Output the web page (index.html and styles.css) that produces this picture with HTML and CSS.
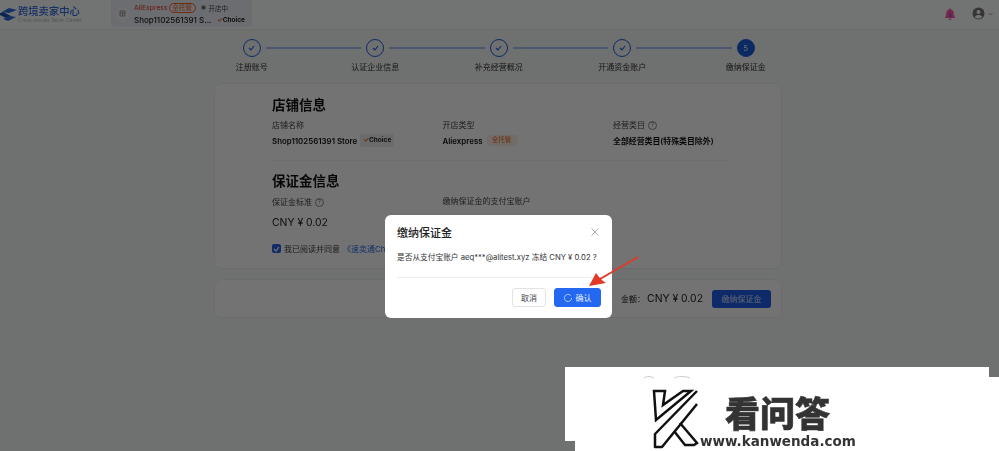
FILE: index.html
```html
<!DOCTYPE html>
<html lang="zh-CN">
<head>
    <meta charset="UTF-8">
    <meta name="viewport" content="width=device-width, initial-scale=1.0">
    <title>跨境卖家中心</title>
    <link rel="stylesheet" href="styles.css">
</head>
<body>

<div class="page">
    <header class="topbar">
        <div class="logo">
            <svg class="logo-mark" width="18" height="16" viewBox="0 0 18 16">
                <path d="M2 6L9 2L17 4L9 7Z" fill="#2e6ae0"/>
                <path d="M-2 8L3 6L11 10L6 12Z" fill="#1e4fb0"/>
                <path d="M3 13L10 10L16 11L8 15Z" fill="#2e6ae0"/>
            </svg>
            <div>
                <div class="logo-title">跨境卖家中心</div>
                <div class="logo-sub">Cross-border Seller Center</div>
            </div>
        </div>
        <div class="store-tab">
            <div class="store-icon">
                <svg width="7" height="7" viewBox="0 0 7 7"><path d="M1 1h5v5H1zM1 3h5M3.500 3v3" fill="none" stroke="#999" stroke-width="1"/></svg>
            </div>
            <div class="store-text">
                <div class="store-line">
                    <span class="ali-name">AliExpress</span>
                    <span class="tag-outline">全托管</span>
                    <span class="status-dot"></span>
                    <span class="status-text">开店中</span>
                </div>
                <div class="store-line store-name">
                    <span>Shop1102561391 S...</span>
                    <span class="choice-tag"><i>✓</i>Choice</span>
                </div>
            </div>
        </div>
        <div class="top-icons">
            <svg class="bell" width="12" height="12" viewBox="0 0 12 12">
                <path d="M6 .5c.6 0 1 .4 1 1 1.900.5 2.800 2 2.800 4 0 2 .5 3 1.200 3.800v.7H1v-.7C1.700 8.500 2.200 7.500 2.200 5.500c0-2 .9-3.500 2.800-4 0-.6.4-1 1-1zM4.500 10.500h3C7.400 11.400 6.800 12 6 12s-1.400-.6-1.500-1.500z" fill="#ff5fa0"/>
                <path d="M6 3L8 9H5z" fill="#a04ce0"/>
            </svg>
            <svg class="user" width="13" height="13" viewBox="0 0 13 13">
                <circle cx="6.500" cy="6.500" r="6" fill="#777"/>
                <circle cx="6.500" cy="5" r="2" fill="#fff"/>
                <path d="M2.800 10c.8-1.500 2.200-2 3.700-2s2.900.5 3.700 2c-1 1-2.300 1.600-3.700 1.600S3.800 11 2.800 10z" fill="#fff"/>
            </svg>
            <svg width="5" height="4" viewBox="0 0 5 4"><path d="M.5 1l2 2 2-2" fill="none" stroke="#888" stroke-width=".8"/></svg>
        </div>
    </header>

    <div class="steps">
        <div class="step">
            <div class="step-track"><span class="line hidden"></span><span class="circle"><svg width="7" height="6" viewBox="0 0 7 6"><path d="M1 3l2 2 3-4" fill="none" stroke="#1f5ae0" stroke-width="1.100"/></svg></span><span class="line"></span></div>
            <div class="step-label">注册账号</div>
        </div>
        <div class="step">
            <div class="step-track"><span class="line"></span><span class="circle"><svg width="7" height="6" viewBox="0 0 7 6"><path d="M1 3l2 2 3-4" fill="none" stroke="#1f5ae0" stroke-width="1.100"/></svg></span><span class="line"></span></div>
            <div class="step-label">认证企业信息</div>
        </div>
        <div class="step">
            <div class="step-track"><span class="line"></span><span class="circle"><svg width="7" height="6" viewBox="0 0 7 6"><path d="M1 3l2 2 3-4" fill="none" stroke="#1f5ae0" stroke-width="1.100"/></svg></span><span class="line"></span></div>
            <div class="step-label">补充经营概况</div>
        </div>
        <div class="step">
            <div class="step-track"><span class="line"></span><span class="circle"><svg width="7" height="6" viewBox="0 0 7 6"><path d="M1 3l2 2 3-4" fill="none" stroke="#1f5ae0" stroke-width="1.100"/></svg></span><span class="line"></span></div>
            <div class="step-label">开通资金账户</div>
        </div>
        <div class="step">
            <div class="step-track"><span class="line"></span><span class="circle active">5</span><span class="line hidden"></span></div>
            <div class="step-label">缴纳保证金</div>
        </div>
    </div>

    <section class="card info-card">
        <h2>店铺信息</h2>
        <div class="info-grid">
            <div>
                <div class="info-label">店铺名称</div>
                <div class="info-value">Shop1102561391 Store <span class="choice-tag big"><i>✓</i>Choice</span></div>
            </div>
            <div>
                <div class="info-label">开店类型</div>
                <div class="info-value">Aliexpress <span class="tag-soft">全托管</span></div>
            </div>
            <div>
                <div class="info-label">经营类目 <span class="help">?</span></div>
                <div class="info-value">全部经营类目(特殊类目除外)</div>
            </div>
        </div>
        <hr class="divider">
        <h2 class="second">保证金信息</h2>
        <div class="info-grid deposit">
            <div>
                <div class="info-label">保证金标准 <span class="help">?</span></div>
                <div class="amount">CNY ¥ 0.02</div>
            </div>
            <div>
                <div class="info-label account-label">缴纳保证金的支付宝账户</div>
            </div>
        </div>
        <label class="agree">
            <span class="checkbox"><svg width="7" height="6" viewBox="0 0 7 6"><path d="M1 3l2 2 3-4" fill="none" stroke="#fff" stroke-width="1.200"/></svg></span>
            我已阅读并同意 <a>《速卖通Choice频道服务协议》</a>
        </label>
    </section>

    <section class="card pay-bar">
        <span class="pay-label">金额：</span>
        <span class="amount">CNY ¥ 0.02</span>
        <button class="pay-button">缴纳保证金</button>
    </section>
</div>

<div class="overlay"></div>

<div class="modal">
    <div class="modal-head">
        <span class="modal-title">缴纳保证金</span>
        <svg width="8" height="8" viewBox="0 0 8 8"><path d="M.5.5l7 7M7.500.5l-7 7" stroke="#999" stroke-width=".8"/></svg>
    </div>
    <p class="modal-body">是否从支付宝账户 aeq***@alitest.xyz 冻结 CNY ¥ 0.02 ?</p>
    <div class="modal-foot">
        <button class="btn">取消</button>
        <button class="btn primary">
            <svg width="8" height="8" viewBox="0 0 8 8"><path d="M6.800 1.700A3.600 3.600 0 1 0 7.600 4" fill="none" stroke="#cfe0ff" stroke-width=".8"/></svg>
            确认
        </button>
    </div>
</div>

<svg class="arrow" width="60" height="40" viewBox="0 0 60 40">
    <path d="M54 3L16 25" stroke="#e23a28" stroke-width="2" fill="none"/>
    <path d="M5 32L12 19L15 23L19 27L22 29Z" fill="#e23a28"/>
</svg>

<div class="mark-back"></div>
<div class="mark-front">
    <svg class="mark-scrap" width="50" height="4" viewBox="0 0 50 4">
        <path d="M1 3C4 1 8 1 11 3M31 3C35 1 42 1 47 3" fill="none" stroke="#ccc" stroke-width="1"/>
    </svg>
    <svg class="mark-k" width="52" height="62" viewBox="0 0 52 62">
        <path d="M3 4H14L12 18L32 4H40L5 33Z" fill="none" stroke="#111" stroke-width="2.500"/>
        <path d="M46 4L4 47V60H11L46 17" fill="none" stroke="#111" stroke-width="2.500" stroke-linejoin="round"/>
        <path d="M29 36L46 56L43 58H34L23 44" fill="none" stroke="#111" stroke-width="2.500"/>
    </svg>
    <div class="mark-text">
        <div class="mark-cn">看问答</div>
        <div class="mark-url">www.kanwenda.com</div>
    </div>
</div>

</body>
</html>
```

FILE: styles.css
```css
html, body {
    margin: 0;
    height: 451px;
    overflow: hidden;
}
body {
    font-family: "Inter", "Noto Sans CJK SC", sans-serif;
    color: #222;
    background-color: #f7f8f8;
}
.page {
    filter: blur(0.55px);
}

/* top bar */
.topbar {
    display: flex;
    height: 30px;
    background-color: #fcffff;
    border-bottom: 1px solid #eee;
    box-sizing: border-box;
}
.logo {
    display: flex;
    align-items: center;
    width: 111px;
    height: 27px;
}
.logo-mark {
    flex: none;
}
.logo-title {
    font-size: 10.300px;
    line-height: 12px;
    font-weight: 500;
    color: #2e6ae0;
    white-space: nowrap;
}
.logo-sub {
    font-size: 5px;
    line-height: 6px;
    color: #bbb;
    white-space: nowrap;
}
.store-tab {
    display: flex;
    align-items: center;
    width: 141px;
    height: 27px;
    background-color: #eef2fb;
    border-radius: 0 0 4px 4px;
}
.store-icon {
    display: flex;
    align-items: center;
    justify-content: center;
    width: 13px;
    height: 13px;
    margin: 0 5px 0 5px;
    background-color: #f8f8f8;
    border-radius: 50%;
}
.store-line {
    display: flex;
    align-items: center;
    height: 12px;
    white-space: nowrap;
}
.ali-name {
    font-size: 6.800px;
    color: #e62e14;
    margin-right: 1px;
}
.tag-outline {
    font-size: 6.500px;
    line-height: 8px;
    width: 25px;
    text-align: center;
    color: #f0641e;
    border: 1px solid #f0641e;
    border-radius: 5px;
    margin-right: 5px;
}
.status-dot {
    width: 3px;
    height: 3px;
    border: 1.500px solid #aaa;
    background-color: #666;
    border-radius: 50%;
    margin-right: 3px;
}
.status-text {
    font-size: 6.500px;
    color: #444;
}
.store-name {
    font-size: 8px;
    font-weight: 500;
    justify-content: space-between;
    width: 113px;
}
.choice-tag {
    display: inline-block;
    font-size: 6.500px;
    font-weight: 700;
    color: #222;
    padding: 0 2px;
}
.choice-tag i {
    font-style: normal;
    color: #f0641e;
}
.choice-tag.big {
    font-size: 6.500px;
    line-height: 13px;
    background-color: #eeeeee;
    border-radius: 2px;
    padding: 0 3px;
    margin-left: 1px;
}
.top-icons {
    display: flex;
    align-items: center;
    margin-left: auto;
    height: 27px;
    padding-right: 6px;
}
.bell {
    margin-right: 16px;
}
.user {
    margin-right: 3px;
}

/* steps */
.steps {
    display: grid;
    grid-template-columns: repeat(5, 123.500px);
    margin-left: 190px;
    padding-top: 9px;
    height: 44px;
}
.step-track {
    display: flex;
    align-items: center;
    gap: 5px;
}
.line {
    flex: 1;
    height: 2px;
    background-color: #a9c0f5;
}
.line.hidden {
    visibility: hidden;
}
.circle {
    flex: none;
    display: flex;
    align-items: center;
    justify-content: center;
    width: 18px;
    height: 18px;
    box-sizing: border-box;
    border: 1.500px solid #1f5ae0;
    border-radius: 50%;
}
.circle.active {
    background-color: #1a5bdc;
    color: #dde6ff;
    font-size: 8px;
}
.step-label {
    margin-top: 4px;
    font-size: 8px;
    line-height: 12px;
    text-align: center;
    color: #333;
}

/* cards */
.card {
    width: 568px;
    box-sizing: border-box;
    margin-left: 214px;
    background-color: #ffffff;
    border: 1px solid #f0f0f0;
    border-radius: 8px;
}
.info-card {
    height: 186px;
    padding: 11px 54px 0 57px;
}
h2 {
    margin: 0;
    font-size: 13.500px;
    line-height: 20px;
    font-weight: 700;
    color: #111;
}
h2.second {
    margin-top: 10px;
}
.info-grid {
    display: grid;
    grid-template-columns: 170.500px 170.500px 1fr;
    margin-top: 4px;
}
.info-label {
    display: flex;
    align-items: center;
    gap: 3px;
    font-size: 8px;
    line-height: 12px;
    color: #444;
}
.info-value {
    display: flex;
    align-items: center;
    gap: 2px;
    height: 15px;
    margin-top: 2px;
    font-size: 7.900px;
    font-weight: 600;
    color: #111;
    white-space: nowrap;
}
.help {
    display: inline-block;
    width: 7px;
    height: 7px;
    line-height: 7px;
    text-align: center;
    font-size: 5.500px;
    color: #777;
    border: 1px solid #888;
    border-radius: 50%;
}
.tag-soft {
    width: 30px;
    text-align: center;
    font-size: 6.500px;
    line-height: 11px;
    font-weight: 400;
    color: #f0641e;
    background-color: #fdf0e8;
    margin-left: 2px;
    border-radius: 2px;
}
.divider {
    margin: 12px 0 0 0;
    border: 0;
    border-top: 1px solid #f2f2f2;
}
.deposit {
    margin-top: 5px;
}
.account-label {
    margin-top: -1px;
}
.amount {
    font-size: 10.400px;
    color: #222;
}
.deposit .amount {
    margin-top: 7px;
    line-height: 16px;
}
.agree {
    display: flex;
    align-items: center;
    gap: 3px;
    margin-top: 12px;
    font-size: 8px;
    color: #444;
    white-space: nowrap;
}
.agree a {
    color: #2c6be8;
}
.checkbox {
    display: flex;
    align-items: center;
    justify-content: center;
    width: 9px;
    height: 9px;
    background-color: #2c63e8;
    border-radius: 2px;
}
.pay-bar {
    display: flex;
    align-items: center;
    justify-content: flex-end;
    height: 39px;
    margin-top: 10px;
    padding-right: 10px;
}
.pay-label {
    font-size: 8px;
    margin-right: 2px;
}
.pay-button {
    width: 59px;
    height: 18px;
    margin-left: 9px;
    padding: 0;
    font-family: inherit;
    font-size: 8px;
    color: #d8e2ff;
    background-color: #1f5ee8;
    border: 0;
    border-radius: 3px;
}

/* dialog on top */
.overlay {
    position: fixed;
    inset: 0;
    background-color: rgba(0, 0, 0, 0.55);
}
.modal {
    position: absolute;
    left: 385px;
    top: 215px;
    width: 227px;
    height: 103px;
    box-sizing: border-box;
    padding: 0 11px 0 12px;
    background-color: #fff;
    border-radius: 6px;
}
.modal-head {
    display: flex;
    align-items: center;
    justify-content: space-between;
    height: 33px;
    padding-right: 2px;
}
.modal-title {
    font-size: 11px;
    font-weight: 500;
    color: #222;
}
.modal-body {
    margin: 3px 0 0 0;
    padding-top: 1px;
    height: 25px;
    font-size: 7.700px;
    line-height: 12px;
    color: #333;
    border-bottom: 1px solid #eee;
    white-space: nowrap;
}
.modal-foot {
    display: flex;
    justify-content: flex-end;
    gap: 8px;
    margin-top: 10px;
}
.btn {
    display: flex;
    align-items: center;
    justify-content: center;
    gap: 4px;
    width: 34px;
    height: 19px;
    padding: 0;
    font-family: inherit;
    font-size: 8px;
    color: #444;
    background-color: #fff;
    border: 1px solid #e3e3e3;
    border-radius: 3px;
}
.btn.primary {
    width: 47px;
    color: #e8efff;
    background-color: #2468f2;
    border-color: #2468f2;
}
.arrow {
    position: absolute;
    left: 584px;
    top: 254px;
}

/* site watermark pasted over the corner */
.mark-back {
    position: absolute;
    left: 565px;
    top: 367px;
    width: 424px;
    height: 74px;
    background-color: #fff;
}
.mark-front {
    position: absolute;
    left: 575px;
    top: 377px;
    width: 424px;
    height: 74px;
    background-color: #fff;
}
.mark-scrap {
    position: absolute;
    left: 68px;
    top: -2px;
}
.mark-k {
    position: absolute;
    left: 76px;
    top: 10px;
    filter: blur(0.5px);
}
.mark-text {
    position: absolute;
    left: 125px;
    top: 17px;
    filter: blur(0.4px);
}
.mark-cn {
    margin-left: 25px;
    font-family: "Noto Sans CJK SC", sans-serif;
    font-size: 35px;
    line-height: 36px;
    font-weight: 900;
    color: #333;
    -webkit-text-stroke: 0.6px #333;
}
.mark-url {
    margin-top: 3px;
    font-family: "DejaVu Sans", sans-serif;
    font-size: 13.500px;
    line-height: 16px;
    font-weight: 700;
    color: #333;
}
```
